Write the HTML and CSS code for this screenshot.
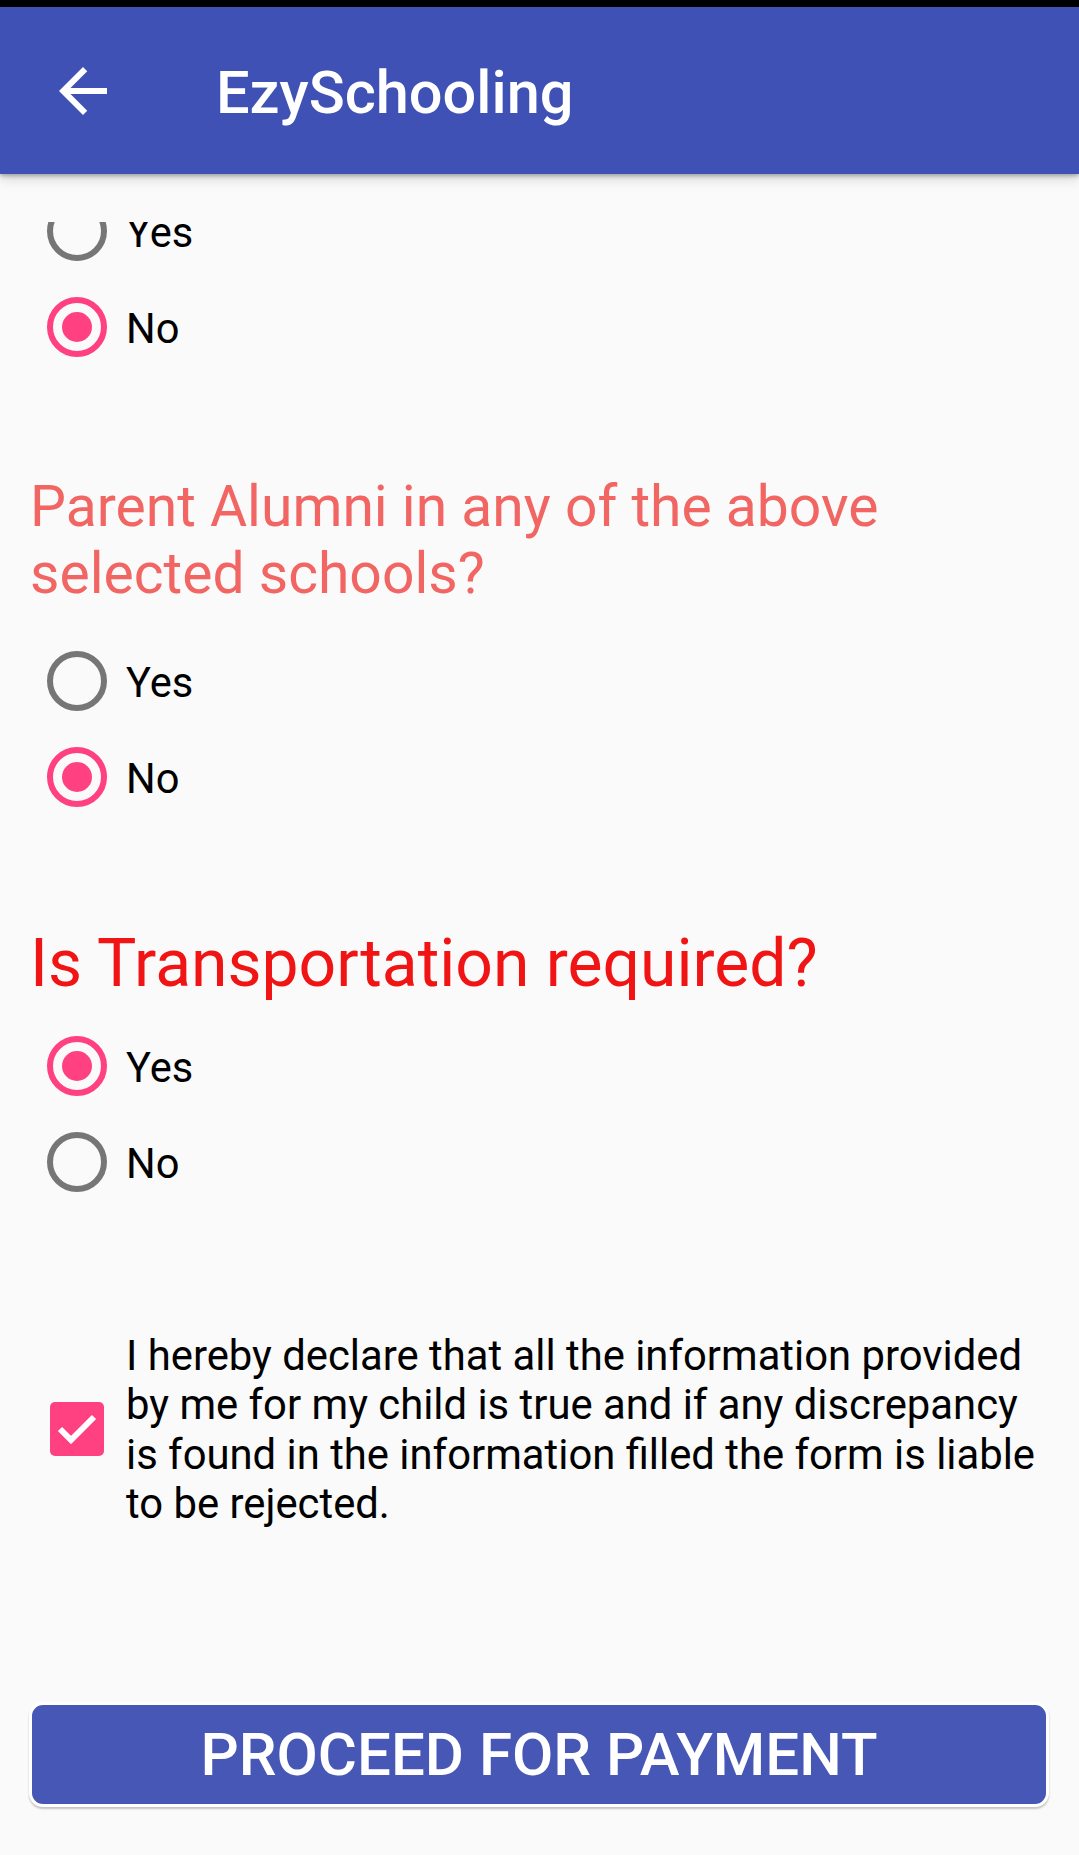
FILE: index.html
```html
<!DOCTYPE html>
<html lang="en">
<head>
<meta charset="utf-8">
<title>EzySchooling</title>
<link rel="stylesheet" href="styles.css">
</head>
<body>
<div class="status"></div>
<header class="appbar">
  <div class="nav-icon">
    <svg viewBox="0 0 24 24" width="72" height="72"><path fill="#fff" d="M20 11H7.830l5.590-5.590L12 4l-8 8 8 8 1.410-1.410L7.830 13H20v-2z"/></svg>
  </div>
  <h1 class="title">EzySchooling</h1>
</header>
<main class="scroll">
  <div class="group first">
    <div class="radio-row"><span class="radio"></span><span class="label">Yes</span></div>
    <div class="radio-row"><span class="radio checked"></span><span class="label">No</span></div>
  </div>
  <h2 class="q q-alumni">Parent Alumni in any of the above selected schools?</h2>
  <div class="group after-alumni">
    <div class="radio-row"><span class="radio"></span><span class="label">Yes</span></div>
    <div class="radio-row"><span class="radio checked"></span><span class="label">No</span></div>
  </div>
  <h2 class="q q-transport">Is Transportation required?</h2>
  <div class="group after-transport">
    <div class="radio-row"><span class="radio checked"></span><span class="label">Yes</span></div>
    <div class="radio-row"><span class="radio"></span><span class="label">No</span></div>
  </div>
  <div class="declare">
    <span class="checkbox">
      <svg viewBox="0 0 54 54" width="54" height="54"><polyline points="10,27 21,38 44,15" fill="none" stroke="#fff" stroke-width="6"/></svg>
    </span>
    <p class="declare-text">I hereby declare that all the information provided by me for my child is true and if any discrepancy is found in the information filled the form is liable to be rejected.</p>
  </div>
</main>
<div class="btn-wrap">
  <button class="btn">PROCEED FOR PAYMENT</button>
</div>
</body>
</html>
```
FILE: styles.css
```css
html, body {
  margin: 0;
  padding: 0;
}
body {
  width: 1079px;
  height: 1855px;
  background: #fafafa;
  font-family: "Roboto", "Noto Sans", sans-serif;
  color: #000;
  overflow: hidden;
}
.status {
  height: 7px;
  background: #000;
}
.appbar {
  position: relative;
  z-index: 2;
  height: 167px;
  background: #3f51b5;
  display: flex;
  align-items: center;
  box-shadow: 0 2px 4px rgba(0,0,0,0.28), 0 5px 12px rgba(0,0,0,0.14);
}
.nav-icon {
  width: 72px;
  height: 72px;
  margin-left: 47px;
  display: flex;
}
.title {
  margin: 0 0 0 97px;
  padding-top: 6px;
  font-size: 59.5px;
  font-weight: 500;
  color: #fff;
  line-height: 1;
}
.scroll {
  margin-top: 48px;
  height: 1480px;
  overflow: hidden;
}
.group.first {
  margin-top: -39px;
}
.radio-row {
  height: 96px;
  display: flex;
  align-items: center;
  padding-left: 47px;
}
.radio {
  box-sizing: border-box;
  width: 60px;
  height: 60px;
  border: 6px solid #767676;
  border-radius: 50%;
  position: relative;
  flex: none;
}
.radio.checked {
  border-color: #ff4081;
}
.radio.checked::after {
  content: "";
  position: absolute;
  left: 9px;
  top: 9px;
  width: 30px;
  height: 30px;
  border-radius: 50%;
  background: #ff4081;
}
.label {
  margin-left: 19px;
  font-size: 41.6px;
  line-height: 50px;
  padding-top: 3px;
}
.q {
  margin: 0;
  padding-left: 30px;
  padding-right: 30px;
  font-weight: 400;
}
.q-alumni {
  margin-top: 98px;
  font-size: 57px;
  line-height: 67px;
  color: #f16563;
}
.after-alumni {
  margin-top: 26px;
}
.q-transport {
  margin-top: 99px;
  font-size: 66px;
  line-height: 79px;
  color: #f01414;
}
.after-transport {
  margin-top: 15px;
}
.declare {
  margin-top: 120px;
  display: flex;
  align-items: center;
  padding-left: 50px;
}
.checkbox {
  flex: none;
  width: 54px;
  height: 54px;
  border-radius: 5px;
  background: #ff4081;
  display: flex;
}
.declare-text {
  margin: 0 0 0 22px;
  width: 926px;
  font-size: 41.8px;
  line-height: 49.3px;
  padding-top: 1px;
}
.btn-wrap {
  padding: 0 30px 0 29px;
}
.btn {
  display: block;
  box-sizing: border-box;
  width: 100%;
  height: 105px;
  margin: 0;
  padding: 0;
  border: 3px solid #fff;
  border-radius: 14px;
  background: #4757b6;
  color: #fff;
  font-family: "Roboto", "Noto Sans", sans-serif;
  font-size: 60px;
  font-weight: 500;
  letter-spacing: 0;
  box-shadow: 0 2px 2px rgba(0,0,0,0.22);
}
```
